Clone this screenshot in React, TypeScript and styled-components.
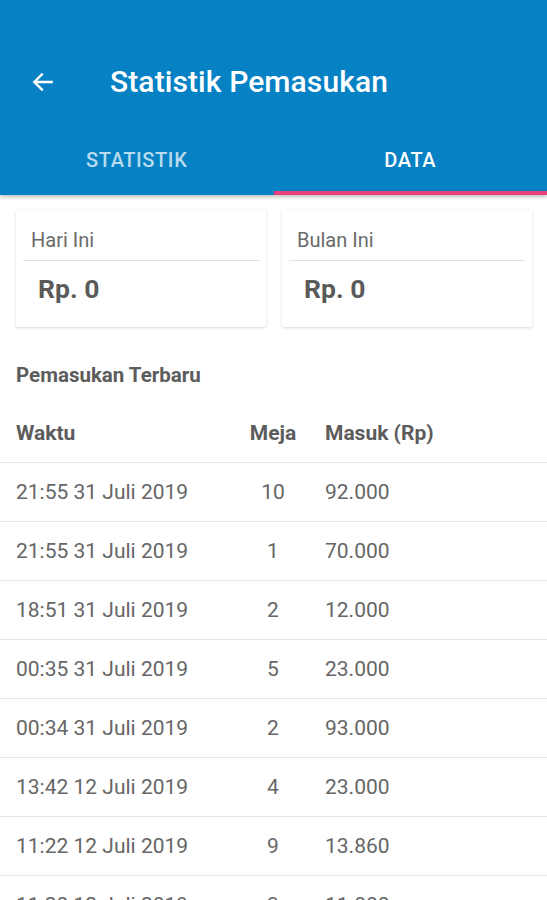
import React from "react";
import styled, { createGlobalStyle } from "styled-components";

const GlobalStyle = createGlobalStyle`
    body {
        margin: 0;
        font-family: Roboto, "Noto Sans", sans-serif;
        background: #ffffff;
    }
`;

type Row = { waktu: string; meja: string; masuk: string };

const rows: Row[] = [
    { waktu: "21:55 31 Juli 2019", meja: "10", masuk: "92.000" },
    { waktu: "21:55 31 Juli 2019", meja: "1", masuk: "70.000" },
    { waktu: "18:51 31 Juli 2019", meja: "2", masuk: "12.000" },
    { waktu: "00:35 31 Juli 2019", meja: "5", masuk: "23.000" },
    { waktu: "00:34 31 Juli 2019", meja: "2", masuk: "93.000" },
    { waktu: "13:42 12 Juli 2019", meja: "4", masuk: "23.000" },
    { waktu: "11:22 12 Juli 2019", meja: "9", masuk: "13.860" },
    { waktu: "11:20 12 Juli 2019", meja: "3", masuk: "11.000" },
];

const Page = styled.div`
    width: 547px;
    height: 900px;
    overflow: hidden;
`;

const AppBar = styled.header`
    background: #0681c4;
    padding-top: 40px;
    box-shadow: 0 2px 4px rgba(0, 0, 0, 0.25);
    position: relative;
    z-index: 1;
`;

const Toolbar = styled.div`
    height: 84px;
    display: flex;
    align-items: center;
    padding-left: 30px;
    gap: 54px;
`;

const Title = styled.h1`
    margin: 0;
    color: #ffffff;
    font-size: 30px;
    line-height: 36px;
    font-weight: 500;
    letter-spacing: 0.1px;
`;

const Tabs = styled.div`
    display: flex;
    height: 71px;
`;

const Tab = styled.div<{ $active?: boolean }>`
    flex: 1;
    display: flex;
    align-items: center;
    justify-content: center;
    font-size: 20px;
    font-weight: 500;
    letter-spacing: 0.6px;
    color: ${p => (p.$active ? "#ffffff" : "rgba(255,255,255,0.72)")};
    border-bottom: 4px solid ${p => (p.$active ? "#e8407a" : "transparent")};
    padding-top: 4px;
`;

const Cards = styled.div`
    display: flex;
    gap: 16px;
    padding: 15px 15px 0 16px;
`;

const Card = styled.div`
    flex: 1;
    height: 117px;
    background: #ffffff;
    border-radius: 2px;
    box-shadow: 0 1px 3px rgba(0, 0, 0, 0.16);
    padding: 0 7px;
`;

const CardLabel = styled.div`
    font-size: 20px;
    line-height: 24px;
    color: #6a6a6a;
    padding: 18px 0 8px 8px;
    border-bottom: 1px solid #e0e0e0;
`;

const CardValue = styled.div`
    font-size: 26.5px;
    line-height: 24px;
    font-weight: 700;
    color: #5a5a5a;
    padding: 16px 0 0 15px;
`;

const SectionTitle = styled.div`
    font-size: 20.5px;
    line-height: 24px;
    font-weight: 700;
    color: #5c5c5c;
    padding: 36px 16px 0;
`;

const TableRow = styled.div<{ $head?: boolean }>`
    display: grid;
    grid-template-columns: 220px 74px 1fr;
    align-items: center;
    height: 58px;
    padding-left: 16px;
    border-bottom: 1px solid #e6e6e6;
    font-size: 21px;
    font-weight: ${p => (p.$head ? 700 : 400)};
    color: ${p => (p.$head ? "#5c5c5c" : "#666666")};
    margin-top: ${p => (p.$head ? "17px" : "0")};
`;

const CenterCell = styled.span`
    text-align: center;
`;

const Cell = styled.span`
    padding-left: 15px;
`;

function BackArrow() {
    return (
        <svg width="26" height="26" viewBox="0 0 24 24" fill="none">
            <path d="M20 12H4.5M11 5l-7 7 7 7" stroke="#fff" strokeWidth="2.2" strokeLinecap="square" />
        </svg>
    );
}

export default function App() {
    return (
        <Page>
            <GlobalStyle />
            <AppBar>
                <Toolbar>
                    <BackArrow />
                    <Title>Statistik Pemasukan</Title>
                </Toolbar>
                <Tabs>
                    <Tab>STATISTIK</Tab>
                    <Tab $active>DATA</Tab>
                </Tabs>
            </AppBar>
            <Cards>
                <Card>
                    <CardLabel>Hari Ini</CardLabel>
                    <CardValue>Rp. 0</CardValue>
                </Card>
                <Card>
                    <CardLabel>Bulan Ini</CardLabel>
                    <CardValue>Rp. 0</CardValue>
                </Card>
            </Cards>
            <SectionTitle>Pemasukan Terbaru</SectionTitle>
            <TableRow $head>
                <span>Waktu</span>
                <CenterCell>Meja</CenterCell>
                <Cell>Masuk (Rp)</Cell>
            </TableRow>
            {rows.map((r, i) => (
                <TableRow key={i}>
                    <span>{r.waktu}</span>
                    <CenterCell>{r.meja}</CenterCell>
                    <Cell>{r.masuk}</Cell>
                </TableRow>
            ))}
        </Page>
    );
}
